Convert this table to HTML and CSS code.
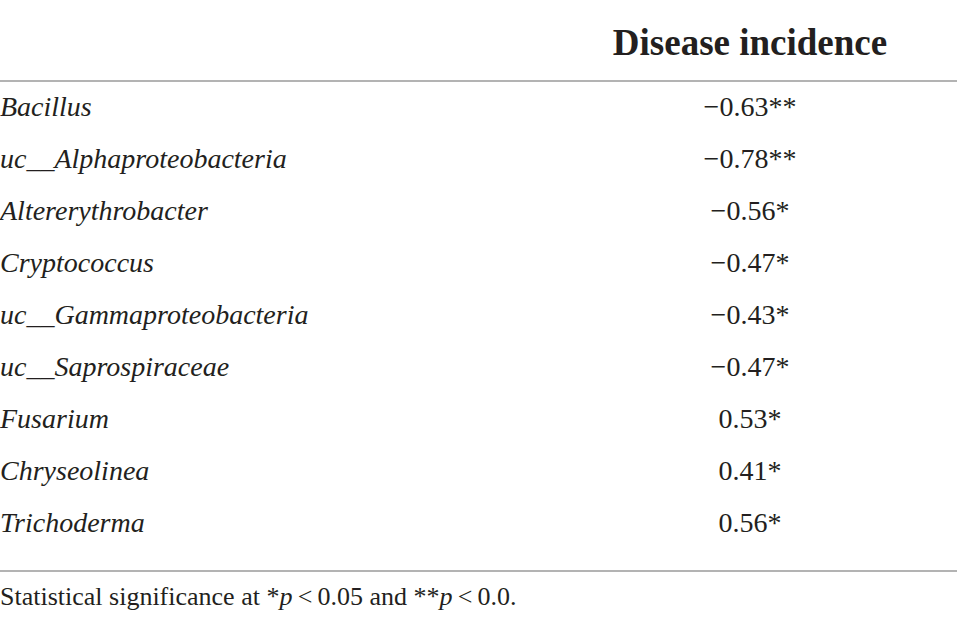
FILE: index.html
```html
<!DOCTYPE html>
<html lang="en">
<head>
  <meta charset="UTF-8">
  <meta name="viewport" content="width=device-width, initial-scale=1.0">
  <title>Disease incidence correlation</title>
  <link rel="stylesheet" href="styles.css">
</head>
<body>
  <table class="tabla">
    <thead>
      <tr>
        <th class="col-genero"></th>
        <th class="col-valor">Disease incidence</th>
      </tr>
    </thead>
    <tbody>
      <tr><td><i>Bacillus</i></td><td class="valor">&minus;0.63**</td></tr>
      <tr><td><i>uc__Alphaproteobacteria</i></td><td class="valor">&minus;0.78**</td></tr>
      <tr><td><i>Altererythrobacter</i></td><td class="valor">&minus;0.56*</td></tr>
      <tr><td><i>Cryptococcus</i></td><td class="valor">&minus;0.47*</td></tr>
      <tr><td><i>uc__Gammaproteobacteria</i></td><td class="valor">&minus;0.43*</td></tr>
      <tr><td><i>uc__Saprospiraceae</i></td><td class="valor">&minus;0.47*</td></tr>
      <tr><td><i>Fusarium</i></td><td class="valor">0.53*</td></tr>
      <tr><td><i>Chryseolinea</i></td><td class="valor">0.41*</td></tr>
      <tr class="ultima"><td><i>Trichoderma</i></td><td class="valor">0.56*</td></tr>
    </tbody>
  </table>
  <p class="nota">Statistical significance at *<i>p</i>&thinsp;&lt;&thinsp;0.05 and **<i>p</i>&thinsp;&lt;&thinsp;0.0.</p>
</body>
</html>
```

FILE: styles.css
```css
body {
  margin: 0;
  font-family: 'Liberation Serif', 'Times New Roman', serif;
  color: #231f20;
  background-color: #fff;
}
.tabla {
  width: 100%;
  border-collapse: collapse;
}
th {
  height: 76px;
  padding: 4px 0 0;
  font-size: 37px;
  font-weight: bold;
  text-align: center;
  border-bottom: 2px solid #b3b3b3;
}
.col-genero {
  width: 543px;
}
td {
  height: 52px;
  padding: 0;
  font-size: 28px;
  line-height: 50px;
  text-align: left;
  vertical-align: top;
}
td.valor {
  text-align: center;
}
/* Espacio antes de la linea inferior */
tr.ultima td {
  padding-bottom: 20px;
  border-bottom: 2px solid #b3b3b3;
}
.nota {
  margin: 10px 0 0;
  font-size: 26px;
}
```
